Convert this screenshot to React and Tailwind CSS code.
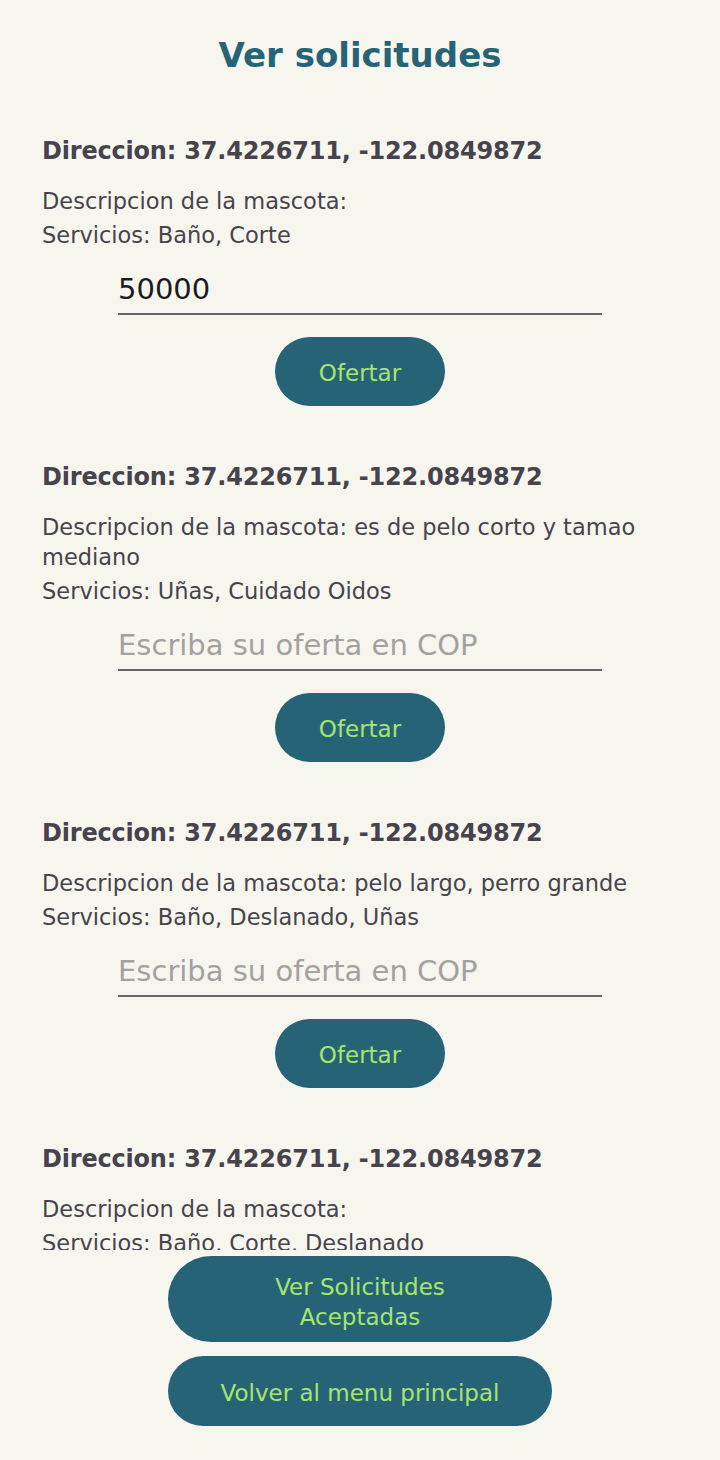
import React, { useState } from 'react';

const solicitudes = [
  { id: 1, direccion: '37.4226711, -122.0849872', descripcion: '', servicios: 'Baño, Corte', oferta: '50000' },
  { id: 2, direccion: '37.4226711, -122.0849872', descripcion: 'es de pelo corto y tamao mediano', servicios: 'Uñas, Cuidado Oidos', oferta: '' },
  { id: 3, direccion: '37.4226711, -122.0849872', descripcion: 'pelo largo, perro grande', servicios: 'Baño, Deslanado, Uñas', oferta: '' },
  { id: 4, direccion: '37.4226711, -122.0849872', descripcion: '', servicios: 'Baño, Corte, Deslanado', oferta: '' },
];

function SolicitudItem({ item }) {
  const [oferta, setOferta] = useState(item.oferta);

  return (
    <div className="flex flex-col pb-[54px]">
      <h2 className="px-[42px] pt-[1px] text-[24px] leading-[32px] font-bold tracking-[-0.2px] text-[#47434d]">
        Direccion: {item.direccion}
      </h2>
      <div className="pl-[42px] pr-[20px] mt-[19px] flex flex-col gap-[4px] text-[22.5px] leading-[30px] text-[#47434d]">
        <p>Descripcion de la mascota: {item.descripcion}</p>
        <p>Servicios: {item.servicios}</p>
      </div>
      <input
        type="text"
        value={oferta}
        onChange={(e) => setOferta(e.target.value)}
        placeholder="Escriba su oferta en COP"
        className="mx-auto mt-[15px] w-[484px] h-[50px] border-b-2 border-[#67656b] bg-transparent text-[29px] text-[#1c1b1f] placeholder:text-[#a3a19f] outline-none"
      />
      <button className="mx-auto mt-[22px] w-[170px] h-[69px] pt-[3px] rounded-full bg-[#276377] text-[23px] text-[#a6e66d]">
        Ofertar
      </button>
    </div>
  );
}

export default function App() {
  return (
    <div
      className="h-[1460px] flex flex-col bg-[#f7f6ee]"
      style={{ fontFamily: '"DejaVu Sans", sans-serif' }}
    >
      <h1 className="pt-[33px] text-center text-[34px] leading-[44px] font-bold text-[#276377]">
        Ver solicitudes
      </h1>

      {/* Lista de solicitudes */}
      <div className="flex-1 min-h-0 overflow-hidden pt-[57px]">
        {solicitudes.map((s) => (
          <SolicitudItem key={s.id} item={s} />
        ))}
      </div>

      <div className="flex flex-col items-center gap-[14px] pt-[6px] pb-[34px]">
        <button className="w-[384px] h-[86px] pt-[5px] rounded-full bg-[#276377] text-[23px] leading-[30px] text-[#a6e66d]">
          Ver Solicitudes
          <br />
          Aceptadas
        </button>
        <button className="w-[384px] h-[70px] pt-[3px] rounded-full bg-[#276377] text-[23px] leading-[30px] text-[#a6e66d]">
          Volver al menu principal
        </button>
      </div>
    </div>
  );
}
